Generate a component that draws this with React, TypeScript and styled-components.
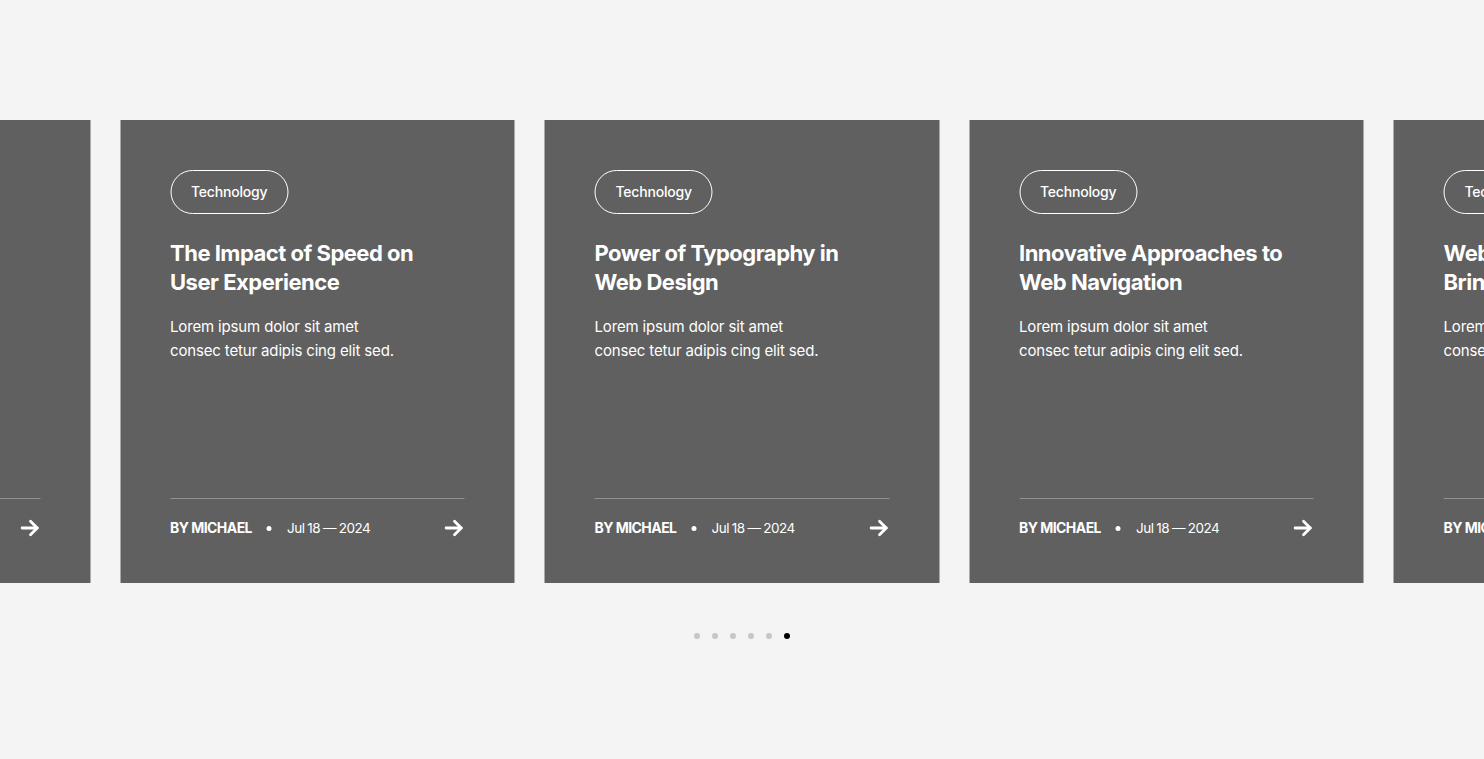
import React from 'react';
import styled, { createGlobalStyle } from 'styled-components';

const GlobalStyle = createGlobalStyle`
  html, body {
    margin: 0;
    padding: 0;
    background: #f4f4f4;
    font-family: Inter, "Noto Sans", sans-serif;
  }
`;

const Section = styled.section`
  width: 100%;
  height: 759px;
  padding-top: 120px;
  box-sizing: border-box;
  overflow: hidden;
`;

const Track = styled.div<{ $offset: number }>`
  display: flex;
  gap: 30px;
  transform: translateX(${(p) => p.$offset}px);
`;

const Card = styled.article`
  flex: 0 0 394.5px;
  height: 463px;
  box-sizing: border-box;
  padding: 50px 50px 45px;
  background: #5f605f;
  color: #fff;
  display: flex;
  flex-direction: column;
`;

const Tag = styled.span`
  align-self: flex-start;
  height: 44px;
  box-sizing: border-box;
  padding: 0 20px 1px;
  border: 1px solid #fff;
  border-radius: 22px;
  display: flex;
  align-items: center;
  font-size: 14px;
  font-weight: 500;
  letter-spacing: -0.2px;
`;

const Title = styled.h3`
  margin: 25px 0 0;
  font-size: 22px;
  line-height: 29px;
  font-weight: 700;
  letter-spacing: -0.5px;
  white-space: nowrap;
`;

const Text = styled.p`
  margin: 18px 0 0;
  font-size: 15px;
  line-height: 24px;
  font-weight: 400;
  letter-spacing: -0.15px;
  white-space: nowrap;
`;

const Footer = styled.div`
  margin-top: auto;
  border-top: 1px solid rgba(255, 255, 255, 0.3);
  padding-top: 19px;
  display: flex;
  align-items: center;
  height: 20px;
  font-size: 14px;
  line-height: 20px;
`;

const Author = styled.span`
  font-weight: 700;
  text-transform: uppercase;
  letter-spacing: -0.55px;
`;

const Dot = styled.span`
  width: 5px;
  height: 5px;
  border-radius: 50%;
  background: #fff;
  margin: 0 15px;
`;

const DateText = styled.span`
  font-weight: 400;
  font-size: 13.5px;
  letter-spacing: -0.5px;
  word-spacing: -0.5px;
`;

const ArrowLink = styled.a`
  margin-left: auto;
  display: flex;
  color: #fff;
`;

const Pager = styled.div`
  display: flex;
  justify-content: center;
  gap: 12px;
  margin-top: 50px;
`;

const PagerDot = styled.span<{ $active?: boolean }>`
  width: 6px;
  height: 6px;
  border-radius: 50%;
  background: ${(p) => (p.$active ? '#000' : '#c6c6c6')};
`;

const posts = [
  { title: ['Designing Layouts That', 'Guide the Eye'] },
  { title: ['The Impact of Speed on', 'User Experience'] },
  { title: ['Power of Typography in', 'Web Design'] },
  { title: ['Innovative Approaches to', 'Web Navigation'] },
  { title: ['Web Animations That', 'Bring Pages to Life'] },
];

const Arrow = () => (
  <svg width="20" height="18" viewBox="0 0 20 18" fill="none">
    <path d="M1.5 9h15.5M10 2.2l6.8 6.8-6.8 6.8" stroke="currentColor" strokeWidth="2.8" strokeLinecap="round" strokeLinejoin="round" />
  </svg>
);

const App: React.FC = () => {
  return (
    <>
      <GlobalStyle />
      <Section>
        <Track $offset={-304.5}>
          {posts.map((post, i) => (
            <Card key={i}>
              <Tag>Technology</Tag>
              <Title>
                {post.title[0]}
                <br />
                {post.title[1]}
              </Title>
              <Text>
                Lorem ipsum dolor sit amet
                <br />
                consec tetur adipis cing elit sed.
              </Text>
              <Footer>
                <Author>By Michael</Author>
                <Dot />
                <DateText>Jul 18 — 2024</DateText>
                <ArrowLink href="#">
                  <Arrow />
                </ArrowLink>
              </Footer>
            </Card>
          ))}
        </Track>
        <Pager>
          {[0, 1, 2, 3, 4, 5].map((n) => (
            <PagerDot key={n} $active={n === 5} />
          ))}
        </Pager>
      </Section>
    </>
  );
};

export default App;
